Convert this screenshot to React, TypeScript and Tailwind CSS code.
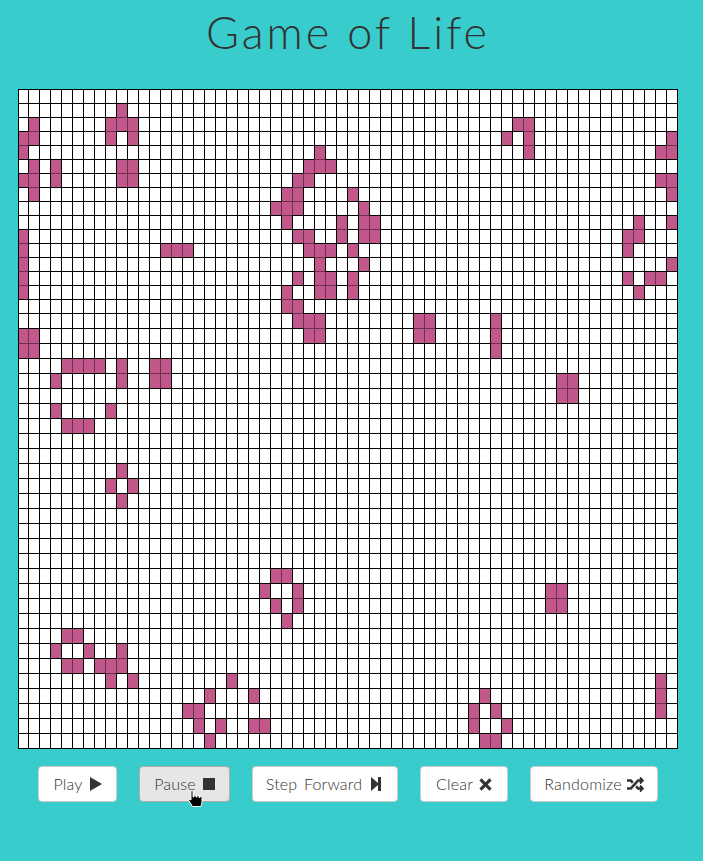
import React from "react";
import { FaRandom } from "react-icons/fa";

// alive cells, row -> columns
const ALIVE: Record<number, number[]> = {
  1: [9],
  2: [1, 8, 9, 10, 45, 46],
  3: [0, 1, 8, 10, 44, 46, 59],
  4: [0, 27, 46, 58, 59],
  5: [1, 3, 9, 10, 26, 27, 28],
  6: [0, 1, 3, 9, 10, 25, 26, 58, 59],
  7: [1, 24, 25, 30, 59],
  8: [23, 24, 25, 31],
  9: [24, 29, 31, 32, 56, 59],
  10: [0, 25, 26, 29, 31, 32, 55, 56],
  11: [0, 13, 14, 15, 26, 27, 28, 30, 55],
  12: [0, 27, 31, 59],
  13: [0, 25, 27, 28, 30, 55, 57, 58],
  14: [0, 24, 27, 28, 30, 56],
  15: [24, 25],
  16: [25, 26, 27, 36, 37, 43],
  17: [0, 1, 26, 27, 36, 37, 43],
  18: [0, 1, 43],
  19: [4, 5, 6, 7, 9, 12, 13],
  20: [3, 9, 12, 13, 49, 50],
  21: [49, 50],
  22: [3, 8],
  23: [4, 5, 6],
  26: [9],
  27: [8, 10],
  28: [9],
  33: [23, 24],
  34: [22, 25, 48, 49],
  35: [23, 25, 48, 49],
  36: [24],
  37: [4, 5],
  38: [3, 6, 9],
  39: [4, 5, 7, 8, 9],
  40: [8, 10, 19, 58],
  41: [17, 21, 42, 58],
  42: [15, 16, 41, 43, 58],
  43: [16, 18, 21, 22, 41, 44],
  44: [17, 42, 43],
};

const rows = Array.from({ length: 45 }, (_, r) => r);
const cols = Array.from({ length: 60 }, (_, c) => c);

const isAlive = (r: number, c: number) => !!ALIVE[r]?.includes(c);

// lines between two live cells are softer in the picture
function cellClass(alive: boolean, softTop: boolean, softLeft: boolean) {
  return [
    "border-t border-l",
    alive ? "bg-[#c1578a]" : "",
    softTop ? "border-t-[#6e3050]" : "border-t-black",
    softLeft ? "border-l-[#6e3050]" : "border-l-black",
  ].join(" ");
}

const Board = () => (
  <div className="grid grid-cols-[10px_repeat(59,11px)] grid-rows-[repeat(16,14px)_repeat(29,15px)] w-[660px] h-[660px] border-r border-b border-black bg-white">
    {rows.map((r) =>
      cols.map((c) => (
        <div
          key={`${r}-${c}`}
          className={cellClass(
            isAlive(r, c),
            isAlive(r, c) && isAlive(r - 1, c),
            isAlive(r, c) && isAlive(r, c - 1)
          )}
        />
      ))
    )}
  </div>
);

const PlayIcon = () => (
  <svg viewBox="0 0 12 14" className="w-3 h-[14px]">
    <path d="M0 0 L12 7 L0 14 Z" fill="#333" />
  </svg>
);

const StopIcon = () => <span className="block w-3 h-3 bg-[#333]" />;

const StepIcon = () => (
  <svg viewBox="0 0 10 14" className="w-[10px] h-[14px]">
    <path d="M0 0 L7 6 V0 H10 V14 H7 V8 L0 14 Z" fill="#333" />
  </svg>
);

const ClearIcon = () => (
  <svg viewBox="0 0 14 14" className="w-[13px] h-[13px]">
    <path
      d="M2.8 0.4 L7 4.6 L11.2 0.4 L13.6 2.8 L9.4 7 L13.6 11.2 L11.2 13.6 L7 9.4 L2.8 13.6 L0.4 11.2 L4.6 7 L0.4 2.8 Z"
      fill="#333"
    />
  </svg>
);

const HandCursor = () => (
  <svg viewBox="0 0 16 18" className="absolute left-[47px] top-[23px] w-[17px] h-[18px]">
    <path
      d="M3.5 1.5 C3.5 0.5 5.5 0.5 5.5 1.5 V7 H6.5 V5.8 C6.5 5 8.5 5 8.5 5.8 V7 H9.5 V6.3 C9.5 5.5 11.5 5.5 11.5 6.3 V7.5 H12.5 V7 C12.5 6.2 14.5 6.2 14.5 7 V12.5 L13.5 16.5 H5 L1.5 11 C0.8 9.8 2.3 8.8 3.5 10 Z"
      fill="#000"
      stroke="#fff"
      strokeWidth="1"
    />
  </svg>
);

const btn =
  "flex items-center justify-center h-9 rounded border text-base tracking-[0.2px] text-[#333] font-light whitespace-nowrap";

export default function App() {
  return (
    <div className="min-h-[861px] bg-[#39cccc] font-['Lato',sans-serif] text-[#333]">
      <div className="w-[696px]">
        <h1 className="h-[89px] pt-[5px] text-center text-[45px] leading-[54px] font-light tracking-[0.065em]">
          Game of Life
        </h1>
        <div className="flex justify-center">
          <Board />
        </div>
        <div className="flex justify-center gap-[22px] mt-[17px]">
          <button className={`${btn} gap-[7px] w-[79px] bg-white border-[#ccc]`}>
            Play <PlayIcon />
          </button>
          <button className={`${btn} gap-[7px] w-[91px] relative bg-[#e6e6e6] border-[#adadad]`}>
            Pause <StopIcon />
            <HandCursor />
          </button>
          <button className={`${btn} gap-[9px] w-[146px] pr-[3px] bg-white border-[#ccc]`}>
            <span className="[word-spacing:2px]">Step Forward</span> <StepIcon />
          </button>
          <button className={`${btn} gap-[6px] w-[88px] bg-white border-[#ccc]`}>
            Clear <ClearIcon />
          </button>
          <button className={`${btn} gap-[5px] w-[128px] bg-white border-[#ccc]`}>
            Randomize <FaRandom className="w-[17px] h-[17px] text-[#333]" />
          </button>
        </div>
      </div>
    </div>
  );
}
